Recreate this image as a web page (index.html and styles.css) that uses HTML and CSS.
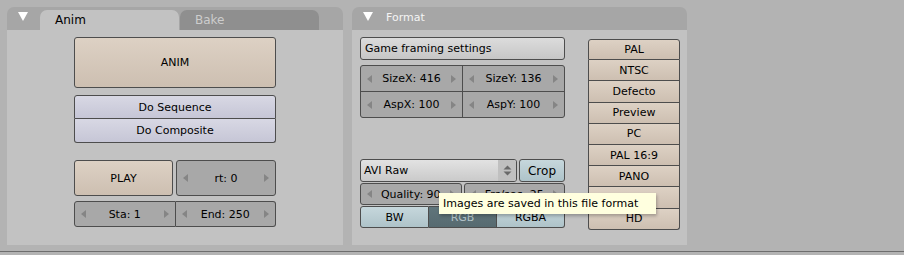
FILE: index.html
```html
<!DOCTYPE html>
<html lang="en">
<head>
    <meta charset="UTF-8">
    <title>Render buttons</title>
    <link rel="stylesheet" href="styles.css">
</head>
<body>
    <div class="panels">
        <section class="panel panel-anim">
            <header class="panel-head">
                <span class="collapse"></span>
                <div class="tabs">
                    <span class="tab tab-active">Anim</span>
                    <span class="tab">Bake</span>
                </div>
            </header>
            <div class="panel-body anim-body">
                <div class="btn warm btn-anim">ANIM</div>
                <div class="group lav-group">
                    <div class="btn lav">Do Sequence</div>
                    <div class="btn lav">Do Composite</div>
                </div>
                <div class="play-row">
                    <div class="btn warm btn-play">PLAY</div>
                    <div class="num num-rt"><i class="arr arr-l"></i><span>rt: 0</span><i class="arr arr-r"></i></div>
                </div>
                <div class="group joined frame-row">
                    <div class="num"><i class="arr arr-l"></i><span>Sta: 1</span><i class="arr arr-r"></i></div>
                    <div class="num"><i class="arr arr-l"></i><span>End: 250</span><i class="arr arr-r"></i></div>
                </div>
            </div>
        </section>

        <section class="panel panel-format">
            <header class="panel-head">
                <span class="collapse"></span>
                <span class="panel-title">Format</span>
            </header>
            <div class="panel-body format-body">
                <div class="format-left">
                    <div class="btn plain btn-game">Game framing settings</div>
                    <div class="group size-grid">
                        <div class="num"><i class="arr arr-l"></i><span>SizeX: 416</span><i class="arr arr-r"></i></div>
                        <div class="num"><i class="arr arr-l"></i><span>SizeY: 136</span><i class="arr arr-r"></i></div>
                        <div class="num"><i class="arr arr-l"></i><span>AspX: 100</span><i class="arr arr-r"></i></div>
                        <div class="num"><i class="arr arr-l"></i><span>AspY: 100</span><i class="arr arr-r"></i></div>
                    </div>
                    <div class="codec-row">
                        <div class="menu">
                            <span class="menu-label">AVI Raw</span>
                            <span class="menu-arrows">
                                <svg width="9" height="11" viewBox="0 0 9 11"><path d="M4.5 0.5 L8.5 4.5 L0.5 4.5 Z M0.5 6.5 L8.5 6.5 L4.5 10.5 Z" fill="#6a6a6a"/></svg>
                            </span>
                        </div>
                        <div class="btn blue btn-crop">Crop</div>
                    </div>
                    <div class="quality-row">
                        <div class="num"><i class="arr arr-l"></i><span>Quality: 90</span><i class="arr arr-r"></i></div>
                        <div class="num"><i class="arr arr-l"></i><span>Frs/sec: 25</span><i class="arr arr-r"></i></div>
                    </div>
                    <div class="group joined color-row">
                        <div class="btn blue">BW</div>
                        <div class="btn blue selected">RGB</div>
                        <div class="btn blue">RGBA</div>
                    </div>
                </div>
                <div class="group presets">
                    <div class="btn warm">PAL</div>
                    <div class="btn warm">NTSC</div>
                    <div class="btn warm">Defecto</div>
                    <div class="btn warm">Preview</div>
                    <div class="btn warm">PC</div>
                    <div class="btn warm">PAL 16:9</div>
                    <div class="btn warm">PANO</div>
                    <div class="btn warm">FULL</div>
                    <div class="btn warm">HD</div>
                </div>
            </div>
        </section>
    </div>
    <div class="statusline"></div>

    <div class="tooltip">Images are saved in this file format</div>
</body>
</html>
```

FILE: styles.css
```css
body{
    margin: 0;
    background: #b3b3b3;
    font-family: "DejaVu Sans", sans-serif;
    font-size: 11px;
    color: #000;
    height: 255px;
    overflow: hidden;
}
.panels{
    display: flex;
    gap: 9px;
    padding: 7px 0 0 7px;
}
.panel{
    width: 336px;
}
.panel-format{
    width: 335px;
}
.panel-head{
    height: 23px;
    background: #a6a6a6;
    border-radius: 7px 7px 0 0;
    display: flex;
    align-items: flex-end;
}
.collapse{
    width: 0;
    height: 0;
    border-left: 5px solid transparent;
    border-right: 5px solid transparent;
    border-top: 9px solid #fff;
    margin: 0 0 9px 11px;
}
.tabs{
    display: flex;
    margin-left: 12px;
    gap: 1px;
}
.tab{
    width: 124px;
    height: 20px;
    line-height: 21px;
    padding-left: 15px;
    border-radius: 7px 7px 0 0;
    background: #8f8f8f;
    color: #cdcdcd;
    font-size: 12px;
}
.tab-active{
    background: #c2c2c2;
    color: #000;
}
.panel-title{
    color: #f4f4f4;
    margin: 0 0 6px 13px;
    font-size: 11px;
}
.panel-body{
    height: 215px;
    background: #c2c2c2;
    box-sizing: border-box;
}

/* generic widgets */
.btn{
    box-sizing: border-box;
    border: 1px solid #4d4d4d;
    border-radius: 3px;
    display: flex;
    align-items: center;
    justify-content: center;
}
.warm{
    background: linear-gradient(#ddd1c4, #cdbfb1);
}
.lav{
    background: linear-gradient(#d8d8e4, #c6c6d6);
}
.plain{
    background: linear-gradient(#dcdcdc, #c6c6c6);
}
.blue{
    background: linear-gradient(#c6d7dc, #aec3c9);
}
.selected{
    background: linear-gradient(#60757b, #566a70);
    color: #b3c4c9;
}
.num{
    box-sizing: border-box;
    border: 1px solid #4d4d4d;
    border-radius: 3px;
    background: #a8a8a8;
    display: flex;
    align-items: center;
    justify-content: space-between;
    padding: 0 6px;
}
.arr{
    width: 0;
    height: 0;
    border-top: 4px solid transparent;
    border-bottom: 4px solid transparent;
}
.arr-l{
    border-right: 5px solid #858585;
}
.arr-r{
    border-left: 5px solid #858585;
}
.group{
    display: flex;
    flex-direction: column;
}
.group > *{
    border-radius: 0;
}
.group > *:first-child{
    border-radius: 3px 3px 0 0;
}
.group > *:last-child{
    border-radius: 0 0 3px 3px;
}
.group > * + *{
    border-top: none;
}
.joined{
    flex-direction: row;
}
.joined > *:first-child{
    border-radius: 3px 0 0 3px;
}
.joined > *:last-child{
    border-radius: 0 3px 3px 0;
}
.joined > * + *{
    border-top: 1px solid #4d4d4d;
    border-left: none;
}

/* anim panel */
.anim-body{
    padding: 7px 0 0 67px;
    width: 336px;
}
.anim-body > *{
    width: 202px;
}
.btn-anim{
    height: 51px;
}
.lav-group{
    margin-top: 7px;
}
.lav-group .btn{
    height: 24px;
}
.play-row{
    display: flex;
    gap: 3px;
    margin-top: 17px;
}
.play-row > *{
    height: 36px;
}
.btn-play{
    flex: 0 0 99px;
}
.num-rt{
    flex: 0 0 100px;
}
.frame-row{
    margin-top: 5px;
}
.frame-row .num{
    flex: 1 1 0;
    height: 26px;
}

/* format panel */
.format-body{
    display: flex;
    padding: 7px 0 0 8px;
}
.format-left{
    width: 205px;
}
.btn-game{
    height: 23px;
    justify-content: flex-start;
    padding-left: 4px;
}
.size-grid{
    display: grid;
    grid-template-columns: 1fr 1fr;
    margin-top: 5px;
    border: 1px solid #4d4d4d;
    border-radius: 3px;
    overflow: hidden;
    background: #4d4d4d;
    gap: 1px;
}
.size-grid .num{
    border: none;
    border-radius: 0;
    height: 25px;
}
.codec-row{
    display: flex;
    gap: 2px;
    margin-top: 41px;
}
.menu{
    box-sizing: border-box;
    width: 157px;
    height: 23px;
    border: 1px solid #4d4d4d;
    border-radius: 3px;
    background: linear-gradient(#e2e2e2, #cacaca);
    display: flex;
    align-items: center;
    justify-content: space-between;
    overflow: hidden;
}
.menu-label{
    padding-left: 3px;
}
.menu-arrows{
    width: 18px;
    height: 100%;
    background: #c0c0c0;
    display: flex;
    align-items: center;
    justify-content: center;
}
.btn-crop{
    flex: 1;
    height: 23px;
    font-size: 12px;
}
.quality-row{
    display: flex;
    gap: 2px;
    margin-top: 1px;
}
.quality-row .num{
    flex: 1 1 0;
    height: 22px;
}
.color-row{
    margin-top: 1px;
}
.color-row .btn{
    flex: 1 1 0;
    height: 22px;
}
.presets{
    width: 92px;
    margin: 2px 0 0 23px;
}
.presets .btn{
    height: 21.2px;
}

.statusline{
    margin-top: 6px;
    border-top: 1px solid #6e6e6e;
    height: 3px;
}
.tooltip{
    position: absolute;
    left: 439px;
    top: 193px;
    width: 217px;
    height: 21px;
    box-sizing: border-box;
    padding-left: 4px;
    line-height: 21px;
    background: #ffffdf;
    box-shadow: 1px 2px 3px rgba(0,0,0,0.25);
    font-size: 11px;
}
```
